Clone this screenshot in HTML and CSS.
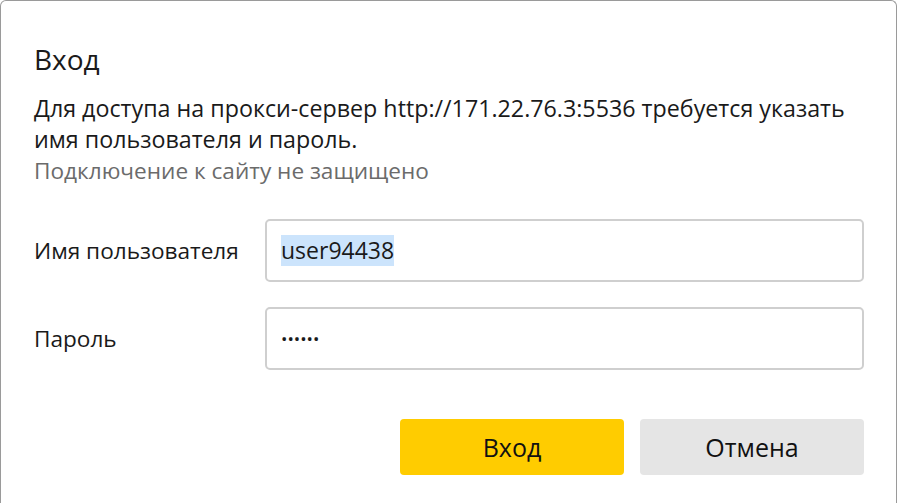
FILE: index.html
```html
<!DOCTYPE html>
<html lang="ru">
<head>
<meta charset="utf-8">
<title>Вход</title>
<link rel="stylesheet" href="styles.css">
</head>
<body>
<div class="dialog">
  <h1 class="title">Вход</h1>
  <p class="message">Для доступа на прокси-сервер http://171.22.76.3:5536 требуется указать<br>имя пользователя и пароль.</p>
  <p class="note">Подключение к сайту не защищено</p>
  <div class="form">
    <label class="label">Имя пользователя</label>
    <div class="field"><span class="selected">user94438</span></div>
    <label class="label">Пароль</label>
    <div class="field"><span class="dots">••••••</span></div>
  </div>
  <div class="actions">
    <button class="btn btn-primary">Вход</button>
    <button class="btn btn-secondary">Отмена</button>
  </div>
</div>
</body>
</html>
```
FILE: styles.css
```css
html, body {
  margin: 0;
  padding: 0;
  background: #ffffff;
  height: 100%;
  overflow: hidden;
}
.dialog {
  box-sizing: border-box;
  width: 897px;
  height: 503px;
  border: 1px solid #9a9a9a;
  border-bottom: none;
  border-radius: 6px 6px 0 0;
  padding: 0 32px 0 33px;
  font-family: "Open Sans", "Noto Sans", sans-serif;
  color: #1a1a1a;
}
.title {
  margin: 38px 0 0 0;
  font-size: 28px;
  font-weight: 400;
  line-height: 40px;
}
.message {
  margin: 14px 0 0 0;
  font-size: 23.25px;
  line-height: 31px;
  white-space: nowrap;
}
.note {
  margin: 0;
  font-size: 22.6px;
  line-height: 31px;
  color: #6b6b6b;
}
.form {
  display: grid;
  grid-template-columns: 231px 1fr;
  row-gap: 25px;
  margin-top: 33px;
  align-items: center;
}
.label {
  font-size: 22.6px;
  line-height: 28px;
}
.field {
  box-sizing: border-box;
  height: 63px;
  border: 2px solid #cfcfcf;
  border-radius: 5px;
  display: flex;
  align-items: center;
  padding-left: 14px;
  font-size: 23px;
}
.selected {
  background: #cce4fc;
  line-height: 31px;
}
.dots {
  font-size: 17px;
}
.actions {
  display: flex;
  justify-content: flex-end;
  gap: 16px;
  margin-top: 49px;
}
.btn {
  width: 224px;
  height: 56px;
  border: none;
  border-radius: 4px;
  font-family: "Open Sans", "Noto Sans", sans-serif;
  font-size: 25px;
  color: #111111;
  padding: 0;
}
.btn-primary {
  background: #ffcc00;
}
.btn-secondary {
  background: #e5e5e5;
}
```
